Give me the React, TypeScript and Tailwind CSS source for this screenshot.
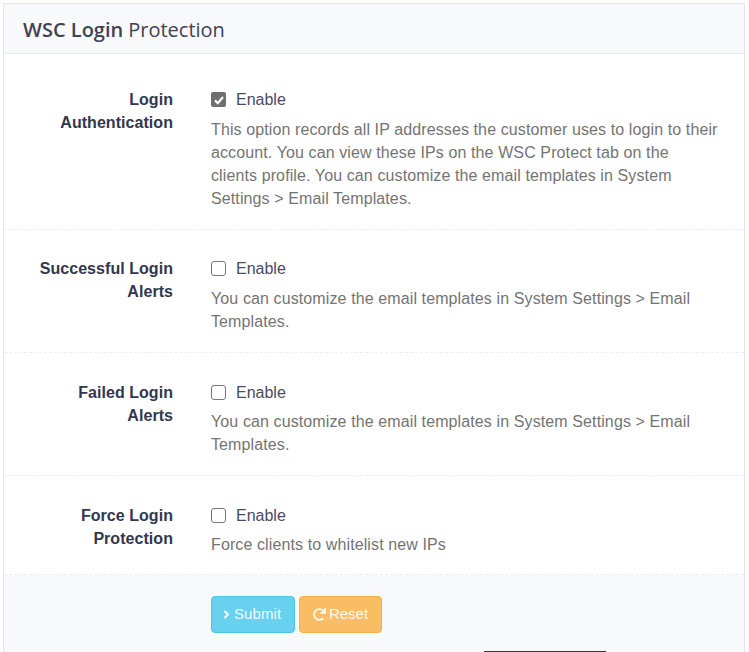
import React from 'react';
import { FaAngleRight, FaRedo } from 'react-icons/fa';

const rows = [
  {
    label: 'Login Authentication',
    checked: true,
    help: 'This option records all IP addresses the customer uses to login to their account. You can view these IPs on the WSC Protect tab on the clients profile. You can customize the email templates in System Settings > Email Templates.',
    cls: 'pt-[34px] pb-[19px]',
    gap: 'mt-[7px]',
  },
  {
    label: 'Successful Login Alerts',
    checked: false,
    help: 'You can customize the email templates in System Settings > Email Templates.',
    cls: 'pt-[27px] pb-[19px]',
    gap: 'mt-[7px]',
  },
  {
    label: 'Failed Login Alerts',
    checked: false,
    help: 'You can customize the email templates in System Settings > Email Templates.',
    cls: 'pt-[28px] pb-[19px]',
    gap: 'mt-[6px]',
  },
  {
    label: 'Force Login Protection',
    checked: false,
    help: 'Force clients to whitelist new IPs',
    cls: 'pt-[28px] pb-[18px]',
    gap: 'mt-[6px]',
  },
];

const Checkbox = ({ checked }: { checked: boolean }) =>
  checked ? (
    <span className="flex h-[15px] w-[15px] items-center justify-center rounded-[2px] bg-[#6f6f6f]">
      <svg viewBox="0 0 12 12" className="h-[12px] w-[12px]" fill="none" stroke="#fff" strokeWidth="2.2">
        <path d="M2 6.4 4.8 9.2 10 3" />
      </svg>
    </span>
  ) : (
    <span className="h-[15px] w-[15px] rounded-[3px] border border-[#767676] bg-white" />
  );

export default function App() {
  return (
    <div className="relative h-[652px] w-[749px] overflow-hidden bg-white pl-[3px] pt-[3px] font-['Liberation_Sans',Arial,sans-serif]">
      <div className="w-[742px] border-x border-t border-[#e3e6ea] bg-white">
        <div className="flex h-[50px] items-center border-b border-[#e9ecef] bg-[#f8f9fb] pl-[19px] pt-[2px] font-['Open_Sans',sans-serif] text-[20px] text-[#3f4254]">
          <span className="font-semibold">WSC Login</span>
          <span className="ml-[5px]">Protection</span>
        </div>
        {rows.map((r) => (
          <div key={r.label} className={`flex border-b border-dashed border-[#ecedef] ${r.cls}`}>
            <div className="w-[169px] pl-[30px] text-right text-[16px] font-bold leading-[23px] tracking-[0.05px] text-[#33374d]">
              {r.label}
            </div>
            <div className="ml-[38px] w-[508px]">
              <div className="flex h-[23px] items-center gap-[10px] text-[16px] text-[#494c5e]">
                <Checkbox checked={r.checked} />
                <span>Enable</span>
              </div>
              <p className={`${r.gap} text-[16px] leading-[23px] tracking-[0.11px] text-[#747474]`}>{r.help}</p>
            </div>
          </div>
        ))}
        <div className="h-[80px] bg-[#f8f9fb] pl-[207px] pt-[21px]">
          <div className="flex gap-[4px]">
            <button className="flex h-[37px] w-[84px] items-center gap-[1px] rounded-[4px] border border-[#4fc3e2] bg-[#67d1ef] pl-[8px] text-[15px] tracking-[0.1px] text-[#f0fbfe]">
              <FaAngleRight size={13} />
              Submit
            </button>
            <button className="flex h-[37px] w-[83px] items-center justify-center gap-[3px] rounded-[4px] border border-[#f5ae4e] bg-[#f9bd63] text-[15px] text-[#fff8ee]">
              <FaRedo size={13} />
              Reset
            </button>
          </div>
        </div>
      </div>
      <div className="absolute bottom-0 left-[484px] h-px w-[122px] bg-[#3a3a3a]" />
    </div>
  );
}
